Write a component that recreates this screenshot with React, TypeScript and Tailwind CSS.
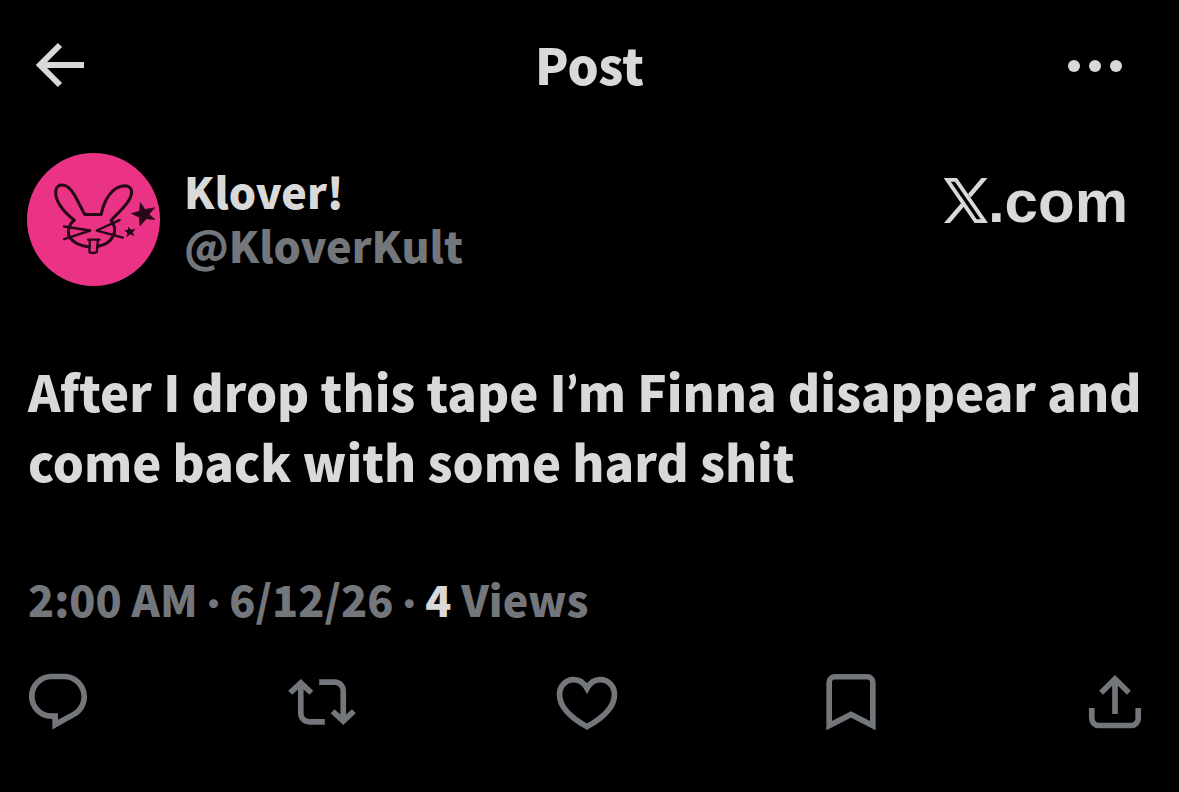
import type { ReactNode } from "react";

function Avatar() {
    return (
        <svg viewBox="51 39 398 398" className="size-[133px] shrink-0" role="img" aria-label="Klover avatar">
            <circle cx="250" cy="238" r="199" fill="#eb3385" />
            <g fill="none" stroke="#260817" strokeWidth="9" strokeLinecap="round" strokeLinejoin="round">
                {/* Ears */}
                <path d="M192 240C166 219 138 190 137 159C136 138 149 132 163 136C190 144 204 190 224 223H273C281 184 303 138 344 137C361 137 368 151 362 168C352 198 323 216 303 241" />
                {/* Face */}
                <path d="M192 240C179 249 171 270 176 286C186 306 211 318 237 320M303 241C313 252 318 271 308 289C299 307 282 315 264 318" />
                {/* Eyes and whiskers */}
                <path d="M162 259L240 271L162 297M328 240L260 271L338 292" strokeWidth="7" />
                <path d="M234 298H268M239 299L238 336Q249 341 260 335L263 299" strokeWidth="7" />
            </g>
            <path d="M390 187L404 208L433 203L416 222L434 238L408 236L389 257L387 231L364 220L388 213Z" fill="#260817" stroke="#260817" strokeWidth="2" />
            <path d="M354 259L361 268L376 267L367 276L373 288L360 282L349 291L351 278L342 271L353 269Z" fill="#260817" />
        </svg>
    );
}

function XLogo() {
    return (
        <svg viewBox="0 0 44 45" className="h-[45px] w-11" fill="none" aria-hidden="true">
            <path d="M3.2 1.9H12L40.4 43.1H31.6Z" stroke="#d9d9d9" strokeWidth="3.8" />
            <path d="M37.5 0H43.5L26.8 19.5L24 16ZM17.2 25L20 28.5L6 45H0Z" fill="#d9d9d9" />
        </svg>
    );
}

// The CJK face sets these marks full width
function Mark({ children }: { children: ReactNode }) {
    return <span className="font-['Lato',sans-serif] leading-none">{children}</span>;
}

function Action({ label, children }: { label: string; children: ReactNode }) {
    return (
        <button type="button" aria-label={label} className="cursor-pointer">
            <svg viewBox="0 0 24 24" className="size-[68px]" fill="none" stroke="currentColor" strokeWidth="2">
                {children}
            </svg>
        </button>
    );
}

export default function App() {
    return (
        <main className="min-h-screen bg-black pb-12 font-['Noto_Sans_CJK_SC',sans-serif] font-black text-[#d9d9d9]">
            {/* Header */}
            <header className="grid grid-cols-3 items-center px-8 pt-8">
                <button type="button" aria-label="Back" className="justify-self-start">
                    <svg viewBox="0 0 56 56" className="size-14" fill="none" stroke="currentColor" strokeWidth="6">
                        <path d="M28 7L8 27L28 47M8 27H52" />
                    </svg>
                </button>
                <h1 className="pb-1 text-center text-[49px] leading-[64px]">Post</h1>
                <button type="button" aria-label="More" className="mr-6 justify-self-end">
                    <svg viewBox="0 0 56 12" className="h-3 w-14" fill="currentColor">
                        <circle cx="7" cy="6" r="6" />
                        <circle cx="28" cy="6" r="6" />
                        <circle cx="49" cy="6" r="6" />
                    </svg>
                </button>
            </header>

            <article>
                {/* Author */}
                <div className="flex items-start px-[27px] pt-[53px]">
                    <Avatar />
                    <div className="ml-6 pt-[10px] text-[43px] leading-[54px]">
                        <p>Klover!</p>
                        <p className="text-[#73767b]">@KloverKult</p>
                    </div>
                    <a href="#" aria-label="X.com" className="mt-[25px] mr-6 ml-auto flex items-start">
                        <XLogo />
                        <span className="font-['Liberation_Sans',sans-serif] text-[60px] leading-[48px] font-bold">.com</span>
                    </a>
                </div>

                <p className="px-7 pt-[70px] text-[49px] leading-[70px]">
                    After I drop this tape I<Mark>’</Mark>m Finna disappear and come back with some hard shit
                </p>

                <p className="px-7 pt-[72px] text-[43px] leading-[60px] text-[#73767b]">
                    2:00 AM <Mark>·</Mark> 6/12/26 <Mark>·</Mark> <span className="text-[#d9d9d9]">4</span> Views
                </p>

                {/* Actions */}
                <div className="flex justify-between pt-10 pr-[30px] pl-6 text-[#73767b]">
                    <Action label="Reply">
                        <path
                            d="M1.751 10c0-4.42 3.584-8 8.005-8h4.366c4.49 0 8.129 3.64 8.129 8.13 0 2.96-1.607 5.68-4.196 7.11l-8.054 4.46v-3.69h-.067c-4.49.1-8.183-3.51-8.183-8.01zm8.005-6c-3.317 0-6.005 2.69-6.005 6 0 3.37 2.77 6.08 6.138 6.01l.351-.01h1.761v2.3l5.087-2.81c1.951-1.08 3.163-3.13 3.163-5.36 0-3.39-2.744-6.13-6.129-6.13H9.756z"
                            fill="currentColor"
                            stroke="none"
                        />
                    </Action>
                    <Action label="Repost">
                        <path
                            d="M4.5 3.88l4.432 4.14-1.364 1.46L5.5 7.55V16c0 1.1.896 2 2 2H13v2H7.5c-2.209 0-4-1.79-4-4V7.55L1.432 9.48.068 8.02 4.5 3.88zM16.5 6H11V4h5.5c2.209 0 4 1.79 4 4v8.45l2.068-1.93 1.364 1.46-4.432 4.14-4.432-4.14 1.364-1.46 2.068 1.93V8c0-1.1-.896-2-2-2z"
                            fill="currentColor"
                            stroke="none"
                        />
                    </Action>
                    <Action label="Like">
                        <path d="M12 7.2C10.9 5.2 9.3 4.1 7.4 4.1C4.4 4.1 2.3 6.4 2.3 9.4C2.3 14 6.5 17.6 12 20.7C17.5 17.6 21.7 14 21.7 9.4C21.7 6.4 19.6 4.1 16.6 4.1C14.7 4.1 13.1 5.2 12 7.2Z" />
                    </Action>
                    <Action label="Bookmark">
                        <path d="M4.3 20.3V5.1a2 2 0 0 1 2-2h11.4a2 2 0 0 1 2 2v15.2L12 16.4z" />
                    </Action>
                    <Action label="Share">
                        <path d="M3.8 14.1v3.7a2.5 2.5 0 0 0 2.5 2.5h11.4a2.5 2.5 0 0 0 2.5-2.5v-3.7M7.1 8.7L12 3.9l4.9 4.8M12 3.9v12.3" />
                    </Action>
                </div>
            </article>
        </main>
    );
}
